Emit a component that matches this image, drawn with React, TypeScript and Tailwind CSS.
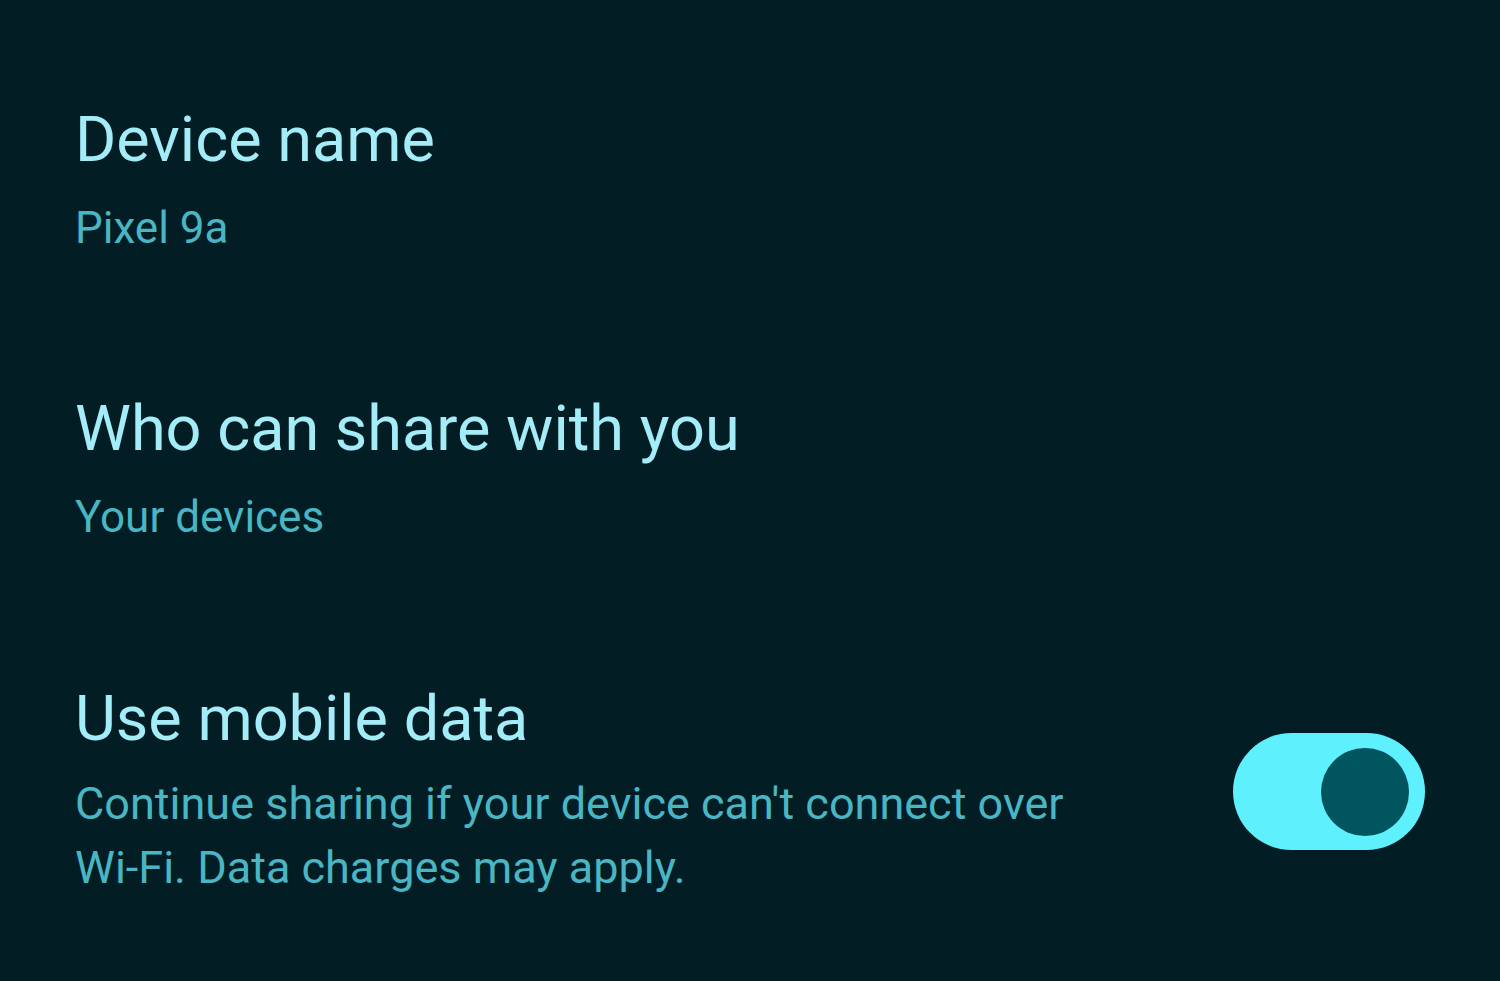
import React from 'react';

const Setting = ({ title, subtitle, className = '' }: { title: string; subtitle: string; className?: string }) => (
  <div className={className}>
    <h2 className="text-[63px] leading-[72px] text-[#a3ecf8]">{title}</h2>
    <p className="mt-[24px] text-[44px] leading-[56px] text-[#4ab6c4]">{subtitle}</p>
  </div>
);

const App = () => {
  return (
    <div className="w-[1500px] h-[981px] overflow-hidden bg-[#021e24] pl-[75px] pr-[75px] pt-[104px] font-['Roboto','Liberation_Sans',sans-serif]">
      <Setting title="Device name" subtitle="Pixel 9a" />
      <Setting className="mt-[137px]" title="Who can share with you" subtitle="Your devices" />

      <div className="mt-[138px] flex items-center justify-between">
        <div className="w-[1020px]">
          <h2 className="text-[63px] leading-[72px] text-[#a3ecf8]">Use mobile data</h2>
          <p className="mt-[17px] text-[45px] leading-[64px] text-[#4ab6c4]">
            Continue sharing if your device can't connect over Wi-Fi. Data charges may apply.
          </p>
        </div>
        <button className="flex h-[117px] w-[192px] items-center justify-end rounded-full bg-[#5ef1fd] pr-[16px]">
          <span className="h-[88px] w-[88px] rounded-full bg-[#00555e]" />
        </button>
      </div>
    </div>
  );
};

export default App;
